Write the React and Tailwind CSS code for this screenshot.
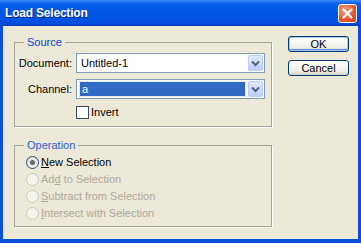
import React from 'react';

const font = "font-['Liberation_Sans',Arial,sans-serif]";

const Chevron = () => (
  <svg width="9" height="7" viewBox="0 0 9 7">
    <path d="M1 1.5 L4.5 5 L8 1.5" fill="none" stroke="#4d6185" strokeWidth="2" />
  </svg>
);

const Select = ({ value, selected }) => (
  <div className="flex h-[20px] w-[189px] items-center border border-[#7f9db9] bg-white pl-[3px] pr-[1px]">
    {selected ? (
      <div className="flex h-[14px] flex-1 items-center bg-[#316ac5] pl-[2px] text-white outline-1 outline-dotted outline-[#c5d3ee]">
        {value}
      </div>
    ) : (
      <div className="flex-1 pl-[1px] text-black">{value}</div>
    )}
    <div className="ml-[3px] flex h-[16px] w-[15px] items-center justify-center rounded-[2px] border border-[#b9cdf6] bg-[linear-gradient(180deg,#dfe8fd,#bccefa)]">
      <Chevron />
    </div>
  </div>
);

const Radio = ({ label, checked, disabled, u }) => (
  <div className="flex h-[17px] items-center gap-[2px]">
    <div
      className={
        'flex h-[13px] w-[13px] items-center justify-center rounded-full border ' +
        (disabled ? 'border-[#cac8bb] bg-[#f4f3ee]' : 'border-[#1c5180] bg-[linear-gradient(135deg,#dcdad0,#fff)]')
      }
    >
      {checked && <div className="h-[5px] w-[5px] rounded-full bg-[#6b6b63]" />}
    </div>
    <span className={disabled ? 'text-[#aca899]' : 'text-black'}>
      {u ? (
        <>
          {label.slice(0, u[0])}
          <span className="underline">{label.slice(u[0], u[1])}</span>
          {label.slice(u[1])}
        </>
      ) : (
        label
      )}
    </span>
  </div>
);

const Button = ({ children, primary }) => (
  <button
    className={
      'h-[16px] w-[61px] rounded-[3px] border border-[#003c74] bg-[linear-gradient(180deg,#ffffff,#f0f0ea_70%,#d6d0c5)] text-[11px] leading-none text-black ' +
      (primary ? 'shadow-[inset_0_0_0_1px_#a8c4ee,inset_0_-1px_0_1px_#5f8ce0]' : '')
    }
  >
    {children}
  </button>
);

export default function App() {
  return (
    <div className={`${font} flex h-[243px] w-[361px] flex-col bg-[#0a4fd8] text-[11px] leading-[13px]`}>
      {/* Title bar */}
      <div className="flex h-[26px] items-center justify-between bg-[linear-gradient(180deg,#3d8ef8_0%,#0b5eee_14%,#0055e5_50%,#0051e2_85%,#003fc8_100%)] pl-[5px] pr-[4px]">
        <span className="text-[12px] font-bold tracking-[-0.2px] text-white [text-shadow:1px_1px_0_#0a2a8a]">
          Load Selection
        </span>
        <div className="flex h-[19px] w-[19px] items-center justify-center rounded-[3px] border border-white bg-[radial-gradient(circle_at_35%_30%,#f0a080,#e2572f_60%,#c23c17)]">
          <svg width="11" height="11" viewBox="0 0 11 11">
            <path d="M1.5 1.5 L9.5 9.5 M9.5 1.5 L1.5 9.5" stroke="#fff" strokeWidth="2.2" strokeLinecap="round" />
          </svg>
        </div>
      </div>

      {/* Body */}
      <div className="mx-[3px] mb-[4px] flex flex-1 bg-[#ece9d8] pl-[11px] pt-[10px]">
        <div className="flex w-[258px] flex-col">
          <fieldset className="border border-[#a5a497] pb-[7px] pr-[6px] shadow-[1px_1px_0_#fff]">
            <legend className="ml-[9px] px-[3px] text-[#0046d5]">Source</legend>
            <div className="mt-[4px] grid grid-cols-[57px_189px] items-center gap-x-[4px] gap-y-[6px]">
              <span className="text-right">Document:</span>
              <Select value="Untitled-1" />
              <span className="text-right">Channel:</span>
              <Select value="a" selected />
              <span />
              <div className="mt-[1px] flex h-[13px] items-center gap-[2px]">
                <div className="h-[13px] w-[13px] border border-[#3a4a5a] bg-white" />
                <span>Invert</span>
              </div>
            </div>
          </fieldset>

          <fieldset className="mt-[12px] border border-[#a5a497] pb-[4px] pl-[11px] shadow-[1px_1px_0_#fff]">
            <legend className="ml-[-2px] px-[3px] text-[#3060d0]">Operation</legend>
            <div className="mt-[2px] flex flex-col">
              <Radio label="New Selection" checked u={[0, 1]} />
              <Radio label="Add to Selection" disabled u={[2, 3]} />
              <Radio label="Subtract from Selection" disabled u={[0, 1]} />
              <Radio label="Intersect with Selection" disabled u={[0, 1]} />
            </div>
          </fieldset>
        </div>

        <div className="ml-[16px] flex flex-col gap-[8px] pt-[0px]">
          <Button primary>OK</Button>
          <Button>Cancel</Button>
        </div>
      </div>
    </div>
  );
}
